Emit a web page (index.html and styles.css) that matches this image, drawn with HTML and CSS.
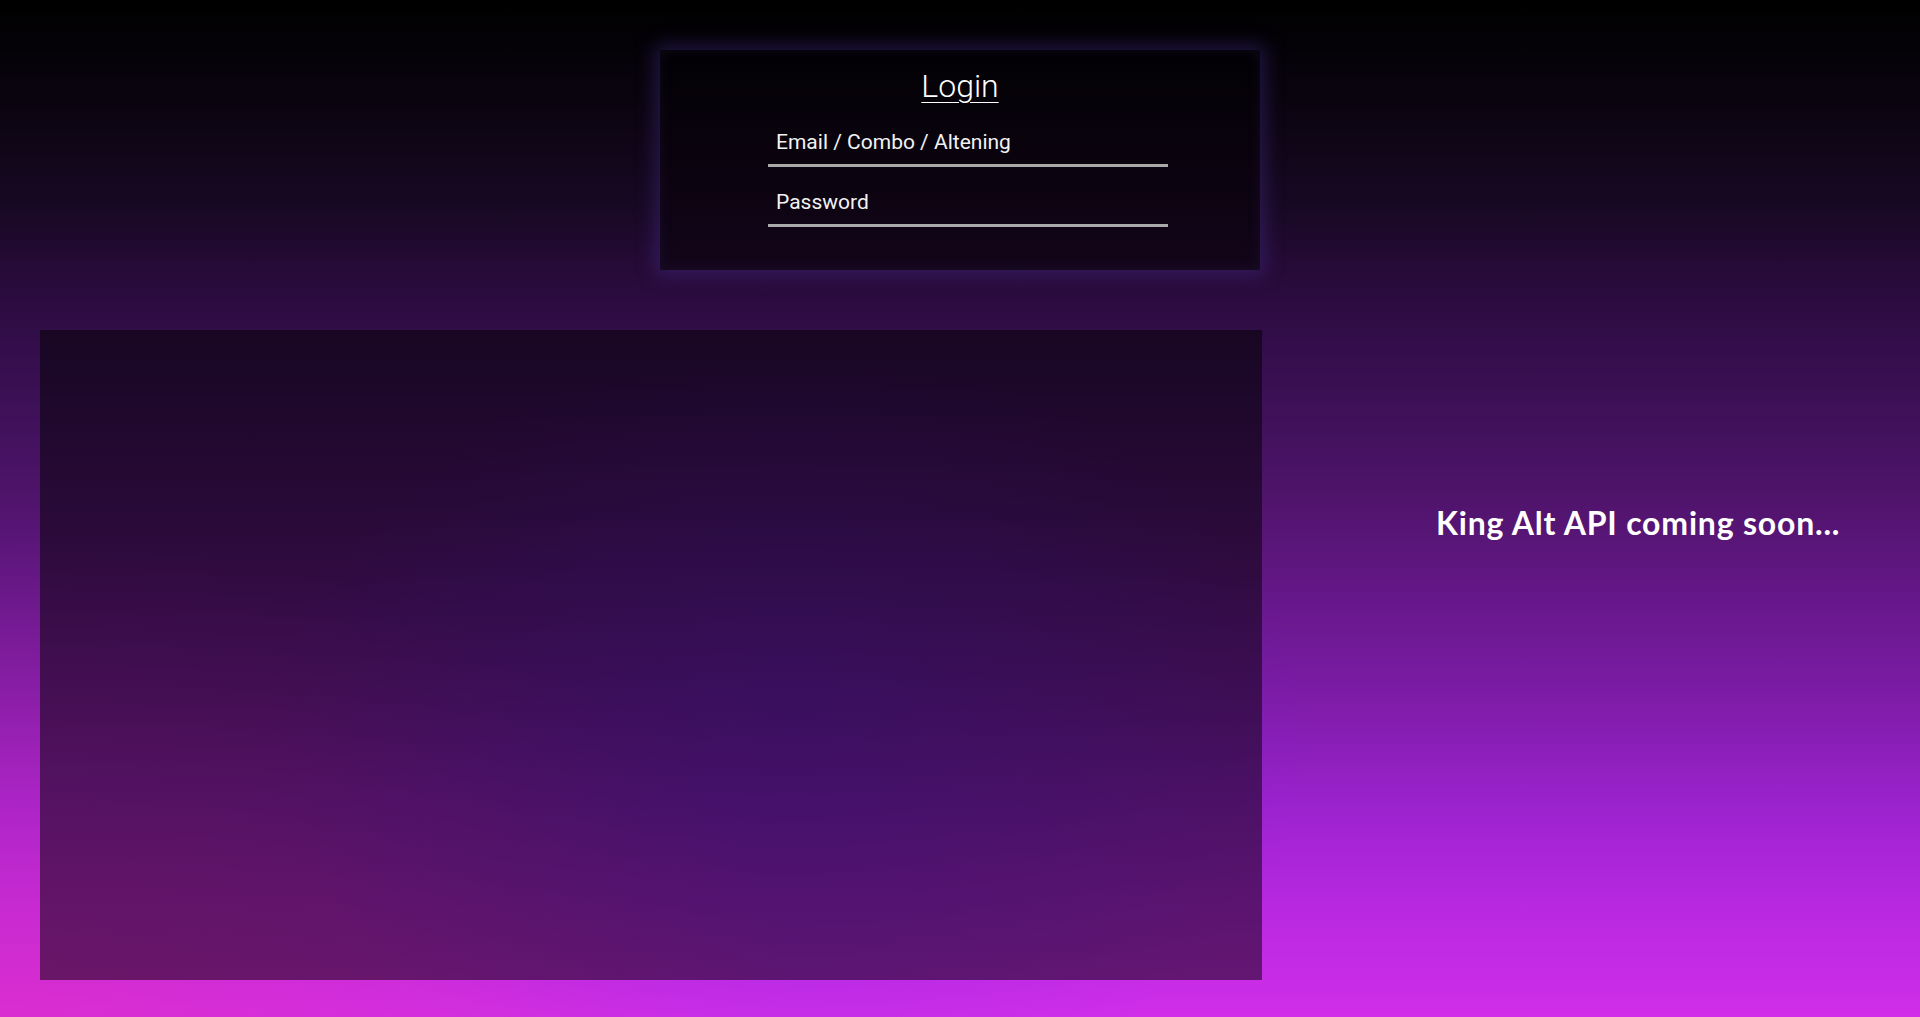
FILE: index.html
```html
<!DOCTYPE html>
<html lang="en">
<head>
<meta charset="utf-8">
<title>King Alt</title>
<link rel="stylesheet" href="styles.css">
</head>
<body>
<div class="page">
  <header class="top">
    <form class="login-card">
      <h1 class="login-title">Login</h1>
      <input class="field" type="text" placeholder="Email / Combo / Altening">
      <input class="field" type="password" placeholder="Password">
    </form>
  </header>
  <main class="main-row">
    <section class="panel"></section>
    <aside class="side">
      <p class="soon">King Alt API coming soon...</p>
    </aside>
  </main>
</div>
</body>
</html>
```
FILE: styles.css
```css
* { box-sizing: border-box; }
html, body { margin: 0; padding: 0; height: 100%; }
body {
  overflow: hidden;
  font-family: Roboto, "Liberation Sans", sans-serif;
  color: #fff;
  background:
    radial-gradient(ellipse 520px 380px at 790px 730px, rgba(95, 35, 235, 0.32), rgba(95, 35, 235, 0) 100%),
    radial-gradient(ellipse 800px 480px at 0px 1017px, rgba(235, 45, 170, 0.38), rgba(235, 45, 170, 0) 100%),
    linear-gradient(to bottom,
      #000000 0px,
      #0a040f 100px,
      #170822 200px,
      #2c0c40 300px,
      #3c1056 400px,
      #50146c 500px,
      #66188a 600px,
      #7e1ca8 700px,
      #9a22cc 800px,
      #b628e0 900px,
      #d02ee8 1017px);
}
.page { width: 1920px; height: 1017px; display: flex; flex-direction: column; }
.top { display: flex; justify-content: center; padding-top: 50px; }
.login-card {
  width: 600px;
  height: 220px;
  display: flex;
  flex-direction: column;
  align-items: center;
  padding-top: 16px;
  background: linear-gradient(to bottom, rgba(2, 1, 4, 0.97), rgba(18, 5, 24, 0.95));
  box-shadow: 0 0 18px 5px rgba(75, 55, 160, 0.38), inset 0 0 14px rgba(60, 50, 120, 0.18);
}
.login-title {
  margin: 0;
  font-weight: 300;
  font-size: 32px;
  line-height: 40px;
  color: #ffffff;
  text-decoration: underline;
  text-decoration-thickness: 1px;
  text-underline-offset: 5px;
}
.field {
  width: 400px;
  height: 43px;
  margin-top: 18px;
  margin-left: 16px;
  padding: 0 8px 4px;
  background: transparent;
  border: 0;
  border-bottom: 3px solid #a9a9a9;
  color: #f2f2f2;
  font-family: Roboto, "Liberation Sans", sans-serif;
  font-size: 21px;
  outline: none;
}
.field + .field { margin-top: 17px; }
.field::placeholder { color: #f2f2f2; opacity: 1; }
.main-row { display: flex; margin-top: 60px; }
.panel {
  width: 1222px;
  height: 650px;
  margin-left: 40px;
  background: rgba(0, 0, 0, 0.5);
}
.side { flex: 1; padding-left: 174px; padding-top: 174px; }
.soon {
  margin: 0;
  font-family: Lato, "Open Sans", sans-serif;
  font-weight: 700;
  font-size: 32px;
  letter-spacing: 0.8px;
  line-height: 38px;
  white-space: nowrap;
}
```
